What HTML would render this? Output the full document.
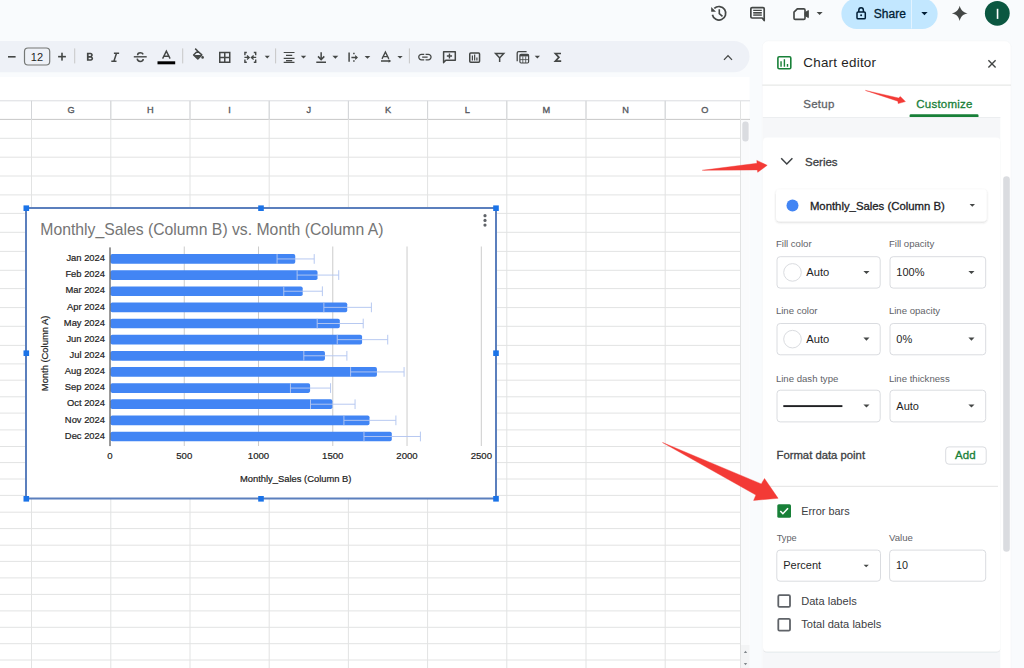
<!DOCTYPE html>
<html><head><meta charset="utf-8">
<style>
html,body{margin:0;padding:0;width:1024px;height:668px;overflow:hidden;background:#f9fbfd;font-family:"Liberation Sans", sans-serif;}
.a{position:absolute;}
svg text{font-family:"Liberation Sans", sans-serif;}
</style></head><body>
<svg class="a" style="left:0;top:0" width="1024" height="668" viewBox="0 0 1024 668">
<rect x="0" y="77" width="749.5" height="591" fill="#ffffff"/>
<line x1="0" y1="100.8" x2="750" y2="100.8" stroke="#dadce0" stroke-width="1"/>
<line x1="0" y1="119.4" x2="740.5" y2="119.4" stroke="#c7c7c7" stroke-width="1"/>
<line x1="0" y1="138.3" x2="740.5" y2="138.3" stroke="#e2e3e3" stroke-width="1"/>
<line x1="0" y1="157.2" x2="740.5" y2="157.2" stroke="#e2e3e3" stroke-width="1"/>
<line x1="0" y1="176" x2="740.5" y2="176" stroke="#e2e3e3" stroke-width="1"/>
<line x1="0" y1="194.9" x2="740.5" y2="194.9" stroke="#e2e3e3" stroke-width="1"/>
<line x1="0" y1="213.4" x2="740.5" y2="213.4" stroke="#e2e3e3" stroke-width="1"/>
<line x1="0" y1="232.3" x2="740.5" y2="232.3" stroke="#e2e3e3" stroke-width="1"/>
<line x1="0" y1="251.4" x2="740.5" y2="251.4" stroke="#e2e3e3" stroke-width="1"/>
<line x1="0" y1="270.3" x2="740.5" y2="270.3" stroke="#e2e3e3" stroke-width="1"/>
<line x1="0" y1="288.6" x2="740.5" y2="288.6" stroke="#e2e3e3" stroke-width="1"/>
<line x1="0" y1="307.6" x2="740.5" y2="307.6" stroke="#e2e3e3" stroke-width="1"/>
<line x1="0" y1="326.3" x2="740.5" y2="326.3" stroke="#e2e3e3" stroke-width="1"/>
<line x1="0" y1="345.4" x2="740.5" y2="345.4" stroke="#e2e3e3" stroke-width="1"/>
<line x1="0" y1="363.9" x2="740.5" y2="363.9" stroke="#e2e3e3" stroke-width="1"/>
<line x1="0" y1="380.2" x2="740.5" y2="380.2" stroke="#e2e3e3" stroke-width="1"/>
<line x1="0" y1="396.8" x2="740.5" y2="396.8" stroke="#e2e3e3" stroke-width="1"/>
<line x1="0" y1="413.1" x2="740.5" y2="413.1" stroke="#e2e3e3" stroke-width="1"/>
<line x1="0" y1="429.9" x2="740.5" y2="429.9" stroke="#e2e3e3" stroke-width="1"/>
<line x1="0" y1="446.5" x2="740.5" y2="446.5" stroke="#e2e3e3" stroke-width="1"/>
<line x1="0" y1="462.6" x2="740.5" y2="462.6" stroke="#e2e3e3" stroke-width="1"/>
<line x1="0" y1="479.0" x2="740.5" y2="479.0" stroke="#e2e3e3" stroke-width="1"/>
<line x1="0" y1="495.4" x2="740.5" y2="495.4" stroke="#e2e3e3" stroke-width="1"/>
<line x1="0" y1="512.2" x2="740.5" y2="512.2" stroke="#e2e3e3" stroke-width="1"/>
<line x1="0" y1="528.6" x2="740.5" y2="528.6" stroke="#e2e3e3" stroke-width="1"/>
<line x1="0" y1="545.2" x2="740.5" y2="545.2" stroke="#e2e3e3" stroke-width="1"/>
<line x1="0" y1="561.4" x2="740.5" y2="561.4" stroke="#e2e3e3" stroke-width="1"/>
<line x1="0" y1="577.9" x2="740.5" y2="577.9" stroke="#e2e3e3" stroke-width="1"/>
<line x1="0" y1="594.4" x2="740.5" y2="594.4" stroke="#e2e3e3" stroke-width="1"/>
<line x1="0" y1="610.9" x2="740.5" y2="610.9" stroke="#e2e3e3" stroke-width="1"/>
<line x1="0" y1="627.3" x2="740.5" y2="627.3" stroke="#e2e3e3" stroke-width="1"/>
<line x1="0" y1="643.7" x2="740.5" y2="643.7" stroke="#e2e3e3" stroke-width="1"/>
<line x1="0" y1="660.0" x2="740.5" y2="660.0" stroke="#e2e3e3" stroke-width="1"/>
<line x1="740.5" y1="119.4" x2="750" y2="119.4" stroke="#c7c7c7" stroke-width="1"/>
<line x1="31.5" y1="100.8" x2="31.5" y2="668" stroke="#e2e3e3" stroke-width="1"/>
<line x1="110.8" y1="100.8" x2="110.8" y2="668" stroke="#e2e3e3" stroke-width="1"/>
<line x1="190" y1="100.8" x2="190" y2="668" stroke="#e2e3e3" stroke-width="1"/>
<line x1="269.2" y1="100.8" x2="269.2" y2="668" stroke="#e2e3e3" stroke-width="1"/>
<line x1="348.4" y1="100.8" x2="348.4" y2="668" stroke="#e2e3e3" stroke-width="1"/>
<line x1="427.6" y1="100.8" x2="427.6" y2="668" stroke="#e2e3e3" stroke-width="1"/>
<line x1="506.8" y1="100.8" x2="506.8" y2="668" stroke="#e2e3e3" stroke-width="1"/>
<line x1="586" y1="100.8" x2="586" y2="668" stroke="#e2e3e3" stroke-width="1"/>
<line x1="665.2" y1="100.8" x2="665.2" y2="668" stroke="#e2e3e3" stroke-width="1"/>
<line x1="740.5" y1="100.8" x2="740.5" y2="668" stroke="#e2e3e3" stroke-width="1"/>
<line x1="31.5" y1="100.8" x2="31.5" y2="119.4" stroke="#d3d5d8" stroke-width="1"/>
<line x1="110.8" y1="100.8" x2="110.8" y2="119.4" stroke="#d3d5d8" stroke-width="1"/>
<line x1="190" y1="100.8" x2="190" y2="119.4" stroke="#d3d5d8" stroke-width="1"/>
<line x1="269.2" y1="100.8" x2="269.2" y2="119.4" stroke="#d3d5d8" stroke-width="1"/>
<line x1="348.4" y1="100.8" x2="348.4" y2="119.4" stroke="#d3d5d8" stroke-width="1"/>
<line x1="427.6" y1="100.8" x2="427.6" y2="119.4" stroke="#d3d5d8" stroke-width="1"/>
<line x1="506.8" y1="100.8" x2="506.8" y2="119.4" stroke="#d3d5d8" stroke-width="1"/>
<line x1="586" y1="100.8" x2="586" y2="119.4" stroke="#d3d5d8" stroke-width="1"/>
<line x1="665.2" y1="100.8" x2="665.2" y2="119.4" stroke="#d3d5d8" stroke-width="1"/>
<text x="71.2" y="113" font-size="9.2" fill="#575a5f" stroke="#575a5f" stroke-width="0.35" text-anchor="middle">G</text>
<text x="150.4" y="113" font-size="9.2" fill="#575a5f" stroke="#575a5f" stroke-width="0.35" text-anchor="middle">H</text>
<text x="229.6" y="113" font-size="9.2" fill="#575a5f" stroke="#575a5f" stroke-width="0.35" text-anchor="middle">I</text>
<text x="308.8" y="113" font-size="9.2" fill="#575a5f" stroke="#575a5f" stroke-width="0.35" text-anchor="middle">J</text>
<text x="388.0" y="113" font-size="9.2" fill="#575a5f" stroke="#575a5f" stroke-width="0.35" text-anchor="middle">K</text>
<text x="467.2" y="113" font-size="9.2" fill="#575a5f" stroke="#575a5f" stroke-width="0.35" text-anchor="middle">L</text>
<text x="546.4" y="113" font-size="9.2" fill="#575a5f" stroke="#575a5f" stroke-width="0.35" text-anchor="middle">M</text>
<text x="625.6" y="113" font-size="9.2" fill="#575a5f" stroke="#575a5f" stroke-width="0.35" text-anchor="middle">N</text>
<text x="704.8" y="113" font-size="9.2" fill="#575a5f" stroke="#575a5f" stroke-width="0.35" text-anchor="middle">O</text>
<rect x="741" y="119.9" width="8.5" height="548" fill="#fafbfc"/>
<rect x="742.3" y="121.6" width="6.3" height="20" rx="3" fill="#dadce0"/>
<rect x="741" y="645" width="8.5" height="23" fill="#f3f4f5"/>
<path d="M743.8 653.1 L745.5 650.8 L747.2 653.1 Z" fill="#80868b"/>
<path d="M743.8 663.0 L745.5 665.3 L747.2 663.0 Z" fill="#80868b"/>
<rect x="26" y="208" width="470" height="290.5" fill="#ffffff" stroke="#5b7fbd" stroke-width="2"/>
<text x="40.3" y="235" font-size="15.75" fill="#757575">Monthly_Sales (Column B) vs. Month (Column A)</text>
<circle cx="485" cy="215.7" r="1.6" fill="#5f6368"/>
<circle cx="485" cy="220.4" r="1.6" fill="#5f6368"/>
<circle cx="485" cy="225.1" r="1.6" fill="#5f6368"/>
<line x1="184.26" y1="246.5" x2="184.26" y2="446" stroke="#cccccc" stroke-width="1"/>
<text x="184.26" y="458.8" font-size="9.6" fill="#222222" stroke="#222222" stroke-width="0.2" text-anchor="middle">500</text>
<line x1="258.52" y1="246.5" x2="258.52" y2="446" stroke="#cccccc" stroke-width="1"/>
<text x="258.52" y="458.8" font-size="9.6" fill="#222222" stroke="#222222" stroke-width="0.2" text-anchor="middle">1000</text>
<line x1="332.78" y1="246.5" x2="332.78" y2="446" stroke="#cccccc" stroke-width="1"/>
<text x="332.78" y="458.8" font-size="9.6" fill="#222222" stroke="#222222" stroke-width="0.2" text-anchor="middle">1500</text>
<line x1="407.04" y1="246.5" x2="407.04" y2="446" stroke="#cccccc" stroke-width="1"/>
<text x="407.04" y="458.8" font-size="9.6" fill="#222222" stroke="#222222" stroke-width="0.2" text-anchor="middle">2000</text>
<line x1="481.30" y1="246.5" x2="481.30" y2="446" stroke="#cccccc" stroke-width="1"/>
<text x="481.30" y="458.8" font-size="9.6" fill="#222222" stroke="#222222" stroke-width="0.2" text-anchor="middle">2500</text>
<text x="110" y="458.8" font-size="9.6" fill="#222222" stroke="#222222" stroke-width="0.2" text-anchor="middle">0</text>
<text x="105" y="261.10" font-size="9.4" fill="#222222" stroke="#222222" stroke-width="0.2" text-anchor="end">Jan 2024</text>
<rect x="110.5" y="254.10" width="184.75" height="9.7" rx="1.8" fill="#4285f4"/>
<line x1="277.09" y1="258.95" x2="314.22" y2="258.95" stroke="#b3c6f0" stroke-width="0.95"/>
<line x1="277.09" y1="254.10" x2="277.09" y2="263.80" stroke="#b3c6f0" stroke-width="0.95"/>
<line x1="314.22" y1="254.10" x2="314.22" y2="263.80" stroke="#b3c6f0" stroke-width="0.95"/>
<text x="105" y="277.24" font-size="9.4" fill="#222222" stroke="#222222" stroke-width="0.2" text-anchor="end">Feb 2024</text>
<rect x="110.5" y="270.24" width="207.03" height="9.7" rx="1.8" fill="#4285f4"/>
<line x1="297.14" y1="275.09" x2="338.72" y2="275.09" stroke="#b3c6f0" stroke-width="0.95"/>
<line x1="297.14" y1="270.24" x2="297.14" y2="279.94" stroke="#b3c6f0" stroke-width="0.95"/>
<line x1="338.72" y1="270.24" x2="338.72" y2="279.94" stroke="#b3c6f0" stroke-width="0.95"/>
<text x="105" y="293.38" font-size="9.4" fill="#222222" stroke="#222222" stroke-width="0.2" text-anchor="end">Mar 2024</text>
<rect x="110.5" y="286.38" width="192.18" height="9.7" rx="1.8" fill="#4285f4"/>
<line x1="283.77" y1="291.23" x2="322.38" y2="291.23" stroke="#b3c6f0" stroke-width="0.95"/>
<line x1="283.77" y1="286.38" x2="283.77" y2="296.08" stroke="#b3c6f0" stroke-width="0.95"/>
<line x1="322.38" y1="286.38" x2="322.38" y2="296.08" stroke="#b3c6f0" stroke-width="0.95"/>
<text x="105" y="309.52" font-size="9.4" fill="#222222" stroke="#222222" stroke-width="0.2" text-anchor="end">Apr 2024</text>
<rect x="110.5" y="302.52" width="236.73" height="9.7" rx="1.8" fill="#4285f4"/>
<line x1="323.87" y1="307.37" x2="371.40" y2="307.37" stroke="#b3c6f0" stroke-width="0.95"/>
<line x1="323.87" y1="302.52" x2="323.87" y2="312.22" stroke="#b3c6f0" stroke-width="0.95"/>
<line x1="371.40" y1="302.52" x2="371.40" y2="312.22" stroke="#b3c6f0" stroke-width="0.95"/>
<text x="105" y="325.66" font-size="9.4" fill="#222222" stroke="#222222" stroke-width="0.2" text-anchor="end">May 2024</text>
<rect x="110.5" y="318.66" width="229.31" height="9.7" rx="1.8" fill="#4285f4"/>
<line x1="317.19" y1="323.51" x2="363.23" y2="323.51" stroke="#b3c6f0" stroke-width="0.95"/>
<line x1="317.19" y1="318.66" x2="317.19" y2="328.36" stroke="#b3c6f0" stroke-width="0.95"/>
<line x1="363.23" y1="318.66" x2="363.23" y2="328.36" stroke="#b3c6f0" stroke-width="0.95"/>
<text x="105" y="341.80" font-size="9.4" fill="#222222" stroke="#222222" stroke-width="0.2" text-anchor="end">Jun 2024</text>
<rect x="110.5" y="334.80" width="251.58" height="9.7" rx="1.8" fill="#4285f4"/>
<line x1="337.24" y1="339.65" x2="387.73" y2="339.65" stroke="#b3c6f0" stroke-width="0.95"/>
<line x1="337.24" y1="334.80" x2="337.24" y2="344.50" stroke="#b3c6f0" stroke-width="0.95"/>
<line x1="387.73" y1="334.80" x2="387.73" y2="344.50" stroke="#b3c6f0" stroke-width="0.95"/>
<text x="105" y="357.94" font-size="9.4" fill="#222222" stroke="#222222" stroke-width="0.2" text-anchor="end">Jul 2024</text>
<rect x="110.5" y="350.94" width="214.45" height="9.7" rx="1.8" fill="#4285f4"/>
<line x1="303.82" y1="355.79" x2="346.89" y2="355.79" stroke="#b3c6f0" stroke-width="0.95"/>
<line x1="303.82" y1="350.94" x2="303.82" y2="360.64" stroke="#b3c6f0" stroke-width="0.95"/>
<line x1="346.89" y1="350.94" x2="346.89" y2="360.64" stroke="#b3c6f0" stroke-width="0.95"/>
<text x="105" y="374.08" font-size="9.4" fill="#222222" stroke="#222222" stroke-width="0.2" text-anchor="end">Aug 2024</text>
<rect x="110.5" y="367.08" width="266.44" height="9.7" rx="1.8" fill="#4285f4"/>
<line x1="350.60" y1="371.93" x2="404.07" y2="371.93" stroke="#b3c6f0" stroke-width="0.95"/>
<line x1="350.60" y1="367.08" x2="350.60" y2="376.78" stroke="#b3c6f0" stroke-width="0.95"/>
<line x1="404.07" y1="367.08" x2="404.07" y2="376.78" stroke="#b3c6f0" stroke-width="0.95"/>
<text x="105" y="390.22" font-size="9.4" fill="#222222" stroke="#222222" stroke-width="0.2" text-anchor="end">Sep 2024</text>
<rect x="110.5" y="383.22" width="199.60" height="9.7" rx="1.8" fill="#4285f4"/>
<line x1="290.45" y1="388.07" x2="330.55" y2="388.07" stroke="#b3c6f0" stroke-width="0.95"/>
<line x1="290.45" y1="383.22" x2="290.45" y2="392.92" stroke="#b3c6f0" stroke-width="0.95"/>
<line x1="330.55" y1="383.22" x2="330.55" y2="392.92" stroke="#b3c6f0" stroke-width="0.95"/>
<text x="105" y="406.36" font-size="9.4" fill="#222222" stroke="#222222" stroke-width="0.2" text-anchor="end">Oct 2024</text>
<rect x="110.5" y="399.36" width="221.88" height="9.7" rx="1.8" fill="#4285f4"/>
<line x1="310.50" y1="404.21" x2="355.06" y2="404.21" stroke="#b3c6f0" stroke-width="0.95"/>
<line x1="310.50" y1="399.36" x2="310.50" y2="409.06" stroke="#b3c6f0" stroke-width="0.95"/>
<line x1="355.06" y1="399.36" x2="355.06" y2="409.06" stroke="#b3c6f0" stroke-width="0.95"/>
<text x="105" y="422.50" font-size="9.4" fill="#222222" stroke="#222222" stroke-width="0.2" text-anchor="end">Nov 2024</text>
<rect x="110.5" y="415.50" width="259.01" height="9.7" rx="1.8" fill="#4285f4"/>
<line x1="343.92" y1="420.35" x2="395.90" y2="420.35" stroke="#b3c6f0" stroke-width="0.95"/>
<line x1="343.92" y1="415.50" x2="343.92" y2="425.20" stroke="#b3c6f0" stroke-width="0.95"/>
<line x1="395.90" y1="415.50" x2="395.90" y2="425.20" stroke="#b3c6f0" stroke-width="0.95"/>
<text x="105" y="438.64" font-size="9.4" fill="#222222" stroke="#222222" stroke-width="0.2" text-anchor="end">Dec 2024</text>
<rect x="110.5" y="431.64" width="281.29" height="9.7" rx="1.8" fill="#4285f4"/>
<line x1="363.97" y1="436.49" x2="420.41" y2="436.49" stroke="#b3c6f0" stroke-width="0.95"/>
<line x1="363.97" y1="431.64" x2="363.97" y2="441.34" stroke="#b3c6f0" stroke-width="0.95"/>
<line x1="420.41" y1="431.64" x2="420.41" y2="441.34" stroke="#b3c6f0" stroke-width="0.95"/>
<line x1="110" y1="247.4" x2="110" y2="446.1" stroke="#333333" stroke-width="1"/>
<text x="295.7" y="482.1" font-size="9.4" fill="#222222" stroke="#222222" stroke-width="0.2" text-anchor="middle">Monthly_Sales (Column B)</text>
<text transform="translate(48.2,353.4) rotate(-90)" x="0" y="0" font-size="9.4" fill="#222222" stroke="#222222" stroke-width="0.2" text-anchor="middle">Month (Column A)</text>
<rect x="23.5" y="205.4" width="5.6" height="5.6" fill="#1a73e8"/>
<rect x="258.2" y="205.4" width="5.6" height="5.6" fill="#1a73e8"/>
<rect x="493.2" y="205.4" width="5.6" height="5.6" fill="#1a73e8"/>
<rect x="23.5" y="350.4" width="5.6" height="5.6" fill="#1a73e8"/>
<rect x="493.2" y="350.4" width="5.6" height="5.6" fill="#1a73e8"/>
<rect x="23.5" y="496.0" width="5.6" height="5.6" fill="#1a73e8"/>
<rect x="258.2" y="496.0" width="5.6" height="5.6" fill="#1a73e8"/>
<rect x="493.2" y="496.0" width="5.6" height="5.6" fill="#1a73e8"/>
<path d="M712.4 14.7 A6.75 6.75 0 1 0 714.3 8.4" fill="none" stroke="#444746" stroke-width="1.7"/>
<path d="M711.2 7.0 L711.2 11.8 L716.0 11.8 Z" fill="#444746"/>
<path d="M719.3 9.2 V13.6 L722.5 16.3" fill="none" stroke="#444746" stroke-width="1.6"/>
<path d="M762.2 18.0 H752.1 Q750.85 18.0 750.85 16.75 V8.85 Q750.85 7.55 752.1 7.55 H763.0 Q764.2 7.55 764.2 8.85 V20.6 Z" fill="none" stroke="#444746" stroke-width="1.7" stroke-linejoin="round"/>
<rect x="753.3" y="12.7" width="8.4" height="2.5" fill="#9a9b9b"/>
<path d="M753.2 10.4 H761.8 M753.2 12.6 H761.8 M753.2 15.2 H761.8" fill="none" stroke="#444746" stroke-width="1.1"/>
<path d="M797.3 8.9 H803.8 Q805.0 8.9 805.0 10.1 V18.3 Q805.0 19.4 803.8 19.4 H795.2 Q794.0 19.4 794.0 18.3 V12.2 Z" fill="none" stroke="#444746" stroke-width="1.65" stroke-linejoin="round"/>
<path d="M805.0 12.6 L808.4 10.6 V17.6 L805.0 15.7 Z" fill="#444746" stroke="#444746" stroke-width="0.9" stroke-linejoin="round"/>
<path d="M816.60 12.00 L822.60 12.00 L819.60 15.00 Z" fill="#444746"/>
<rect x="841.4" y="-1.5" width="96.2" height="30.5" rx="15.25" fill="#c2e7ff"/>
<line x1="911.5" y1="-1" x2="911.5" y2="28.5" stroke="#e3f3ff" stroke-width="1"/>
<path d="M858.8 12.0 V10.4 Q858.8 7.7 861.1 7.7 Q863.4 7.7 863.4 10.4 V12.0" fill="none" stroke="#001d35" stroke-width="1.5"/>
<rect x="857.0" y="11.9" width="8.3" height="6.9" rx="1.1" fill="none" stroke="#001d35" stroke-width="1.5"/>
<circle cx="861.15" cy="15.35" r="1.0" fill="#001d35"/>
<text x="873.8" y="18.2" font-size="12" fill="#001d35" stroke="#001d35" stroke-width="0.3" letter-spacing="0">Share</text>
<path d="M921.30 12.02 L927.60 12.02 L924.45 15.18 Z" fill="#001d35"/>
<path d="M959.7 5.7 C960.9 10.5 963.6 12.3 967.6 13.25 C963.6 14.2 960.9 16.0 959.7 21.0 C958.5 16.0 955.8 14.2 951.8 13.25 C955.8 12.3 958.5 10.5 959.7 5.7 Z" fill="#444746"/>
<circle cx="997.3" cy="13.3" r="12.4" fill="#0b5741"/>
<rect x="996.75" y="8.8" width="1.6" height="10.1" fill="#ffffff"/>
<rect x="-30" y="41" width="779.5" height="31.2" rx="15.6" fill="#eef1f7"/>
<rect x="8" y="56.0" width="7.6" height="1.6" fill="#444746"/>
<rect x="24.5" y="48" width="25.2" height="17" rx="3.5" fill="none" stroke="#747775" stroke-width="1.2"/>
<text x="36.9" y="60.6" font-size="11" fill="#1f1f1f" text-anchor="middle">12</text>
<rect x="58.1" y="55.85" width="7.8" height="1.6" fill="#444746"/>
<rect x="61.2" y="52.7" width="1.6" height="7.9" fill="#444746"/>
<rect x="74.2" y="48.4" width="1" height="15" fill="#c7c7c7"/>
<rect x="182.2" y="48.4" width="1" height="15" fill="#c7c7c7"/>
<rect x="275.1" y="48.4" width="1" height="15" fill="#c7c7c7"/>
<rect x="408.9" y="48.4" width="1" height="15" fill="#c7c7c7"/>
<path transform="translate(82.84,50.38) scale(0.5798)" d="M15.6 10.79c.97-.67 1.65-1.77 1.65-2.79 0-2.26-1.75-4-4-4H7v14h7.04c2.09 0 3.71-1.7 3.71-3.79 0-1.52-.86-2.82-2.15-3.42zM10 6.5h3c.83 0 1.5.67 1.5 1.5s-.67 1.5-1.5 1.5h-3v-3zm3.5 9H10v-3h3.5c.83 0 1.5.67 1.5 1.5s-.67 1.5-1.5 1.5z" fill="#444746" />
<path d="M113.9 53.3 H119.1 M111.3 61.3 H116.5 M116.5 53.3 L113.9 61.3" fill="none" stroke="#444746" stroke-width="1.5"/>
<path d="M143.2 54.4 Q142.5 52.8 140.3 52.8 Q137.6 52.8 137.6 55.2 M137.2 58.6 Q137.5 61.4 140.3 61.4 Q143.2 61.4 143.2 59" fill="none" stroke="#444746" stroke-width="1.5"/>
<rect x="133.8" y="56.1" width="12.9" height="1.4" fill="#444746"/>
<path d="M162.6 58.6 L166.35 51.1 L170.1 58.6 M163.9 56.2 H168.8" fill="none" stroke="#444746" stroke-width="1.4"/>
<rect x="157.5" y="61.3" width="17.7" height="3" fill="#000000"/>
<path d="M195.2 48.6 L197.6 51 M197.6 51 L193.6 55 L197.8 58.9 L201.8 54.9 Z" fill="none" stroke="#444746" stroke-width="1.5" stroke-linejoin="round"/>
<path d="M194.3 55 L201.1 55 L197.8 58.3 Z" fill="#444746"/>
<circle cx="202.6" cy="57.4" r="1.3" fill="#444746"/>
<path d="M219.75 52.55 H229.75 V62.25 H219.75 Z M224.75 52.55 V62.25 M219.75 57.4 H229.75" fill="none" stroke="#444746" stroke-width="1.5"/>
<path d="M246.8 52.5 H244.9 V55.2 M244.9 59.6 V62.3 H246.8 M253.8 52.5 H255.7 V55.2 M255.7 59.6 V62.3 H253.8" fill="none" stroke="#444746" stroke-width="1.4"/>
<path d="M244.4 57.4 H249 M247 55.4 L249.2 57.4 L247 59.4 M256.2 57.4 H251.6 M253.6 55.4 L251.4 57.4 L253.6 59.4" fill="none" stroke="#444746" stroke-width="1.3"/>
<path d="M264.70 55.82 L269.80 55.82 L267.25 58.38 Z" fill="#444746"/>
<path d="M283.7 52.5 H294.5 M286 55.4 H292.2 M283.7 58.3 H294.5 M286 60.6 H292.2 M283.7 62.4 H294.5" fill="none" stroke="#444746" stroke-width="1.2"/>
<path d="M300.80 55.75 L306.20 55.75 L303.50 58.45 Z" fill="#444746"/>
<path d="M321.15 52.2 V59.2 M318 56.4 L321.15 59.6 L324.3 56.4 M316.3 62.2 H326" fill="none" stroke="#444746" stroke-width="1.5"/>
<path d="M332.40 55.82 L338.30 55.82 L335.35 58.78 Z" fill="#444746"/>
<path d="M349.1 52.4 V61.7 M353.9 52.7 V54.2 M353.9 60.2 V61.7 M351.4 57.5 H357.0" fill="none" stroke="#444746" stroke-width="1.5"/>
<path d="M355.2 55.1 L358.0 57.5 L355.2 59.9 Z" fill="#444746"/>
<path d="M364.60 55.88 L370.30 55.88 L367.45 58.72 Z" fill="#444746"/>
<path d="M382.0 58.9 L385.4 52.0 L388.8 58.9 M383.2 56.6 H387.6 M381.0 61.0 H389.2" fill="none" stroke="#444746" stroke-width="1.35"/>
<path d="M388.6 59.2 L391.2 61.0 L388.6 62.8 Z" fill="#444746"/>
<path d="M397.40 55.97 L402.70 55.97 L400.05 58.62 Z" fill="#444746"/>
<path transform="translate(416.74,48.94) scale(0.6800)" d="M3.9 12c0-1.71 1.39-3.1 3.1-3.1h4V7H7c-2.76 0-5 2.24-5 5s2.24 5 5 5h4v-1.9H7c-1.71 0-3.1-1.39-3.1-3.1zM8 13h8v-2H8v2zm9-6h-4v1.9h4c1.71 0 3.1 1.39 3.1 3.1s-1.39 3.1-3.1 3.1h-4V17h4c2.76 0 5-2.24 5-5s-2.24-5-5-5z" fill="#444746" />
<path d="M443.6 51.8 H455.3 V60.3 H445.8 L443.6 62.6 Z" fill="none" stroke="#444746" stroke-width="1.5" stroke-linejoin="round"/>
<path d="M449.45 53.4 V58.6 M446.85 56 H452.05" fill="none" stroke="#444746" stroke-width="1.4"/>
<rect x="469.75" y="52.95" width="9.8" height="9.4" rx="1" fill="none" stroke="#444746" stroke-width="1.5"/>
<path d="M472.4 55.6 V60.4 M474.65 54.4 V60.4 M476.9 57.6 V60.4" fill="none" stroke="#444746" stroke-width="1.2"/>
<path d="M495.6 53.6 H503.7 L499.65 57.9 Z M499.65 57.4 V61.9" fill="none" stroke="#444746" stroke-width="1.5" stroke-linejoin="miter"/>
<path d="M517.2 61.3 V53.0 Q517.2 51.6 518.6 51.6 H526.6" fill="none" stroke="#444746" stroke-width="1.3"/>
<rect x="519.9" y="54.3" width="8.7" height="8.7" rx="1.2" fill="none" stroke="#444746" stroke-width="1.2"/>
<rect x="519.9" y="54.3" width="8.7" height="2.1" fill="#444746"/>
<path d="M519.9 59.6 H528.6 M522.8 56.4 V63 M525.7 56.4 V63" fill="none" stroke="#444746" stroke-width="0.8"/>
<path d="M534.70 55.78 L540.00 55.78 L537.35 58.42 Z" fill="#444746"/>
<path d="M561.0 53.5 H555.4 L558.9 57.3 L555.4 61.1 H561.2" fill="none" stroke="#444746" stroke-width="1.7" stroke-linejoin="miter"/>
<path d="M724.0 59.9 L728.0 55.6 L732.0 59.9" fill="none" stroke="#444746" stroke-width="1.3"/>
<defs><filter id="sh" x="-10%" y="-10%" width="120%" height="120%"><feDropShadow dx="0" dy="1" stdDeviation="1" flood-color="#3c4043" flood-opacity="0.22"/></filter><filter id="sh2" x="-10%" y="-10%" width="120%" height="120%"><feDropShadow dx="0" dy="0.8" stdDeviation="0.7" flood-color="#3c4043" flood-opacity="0.12"/></filter></defs>
<rect x="762.3" y="40.8" width="248.7" height="640" rx="6" fill="#ffffff" stroke="#f0f2f4" stroke-width="0.5"/>
<rect x="777.9" y="56.8" width="12.9" height="11.9" rx="1.3" fill="none" stroke="#188038" stroke-width="1.6"/>
<path d="M781.05 61.3 V66.8 M784.4 59.2 V66.8 M787.5 63.9 V66.8" fill="none" stroke="#188038" stroke-width="1.4"/>
<text x="803.3" y="66.7" font-size="13.4" fill="#1f1f1f" font-weight="normal" text-anchor="start" letter-spacing="0.25">Chart editor</text>
<path d="M988.4 60.2 L995.6 67.4 M995.6 60.2 L988.4 67.4" fill="none" stroke="#444746" stroke-width="1.4"/>
<rect x="762.3" y="84.6" width="248.7" height="1" fill="#e1e3e1"/>
<text x="803.3" y="108.1" font-size="11.5" fill="#5f6368" font-weight="normal" text-anchor="start" letter-spacing="0.25" stroke="#5f6368" stroke-width="0.3">Setup</text>
<text x="916.2" y="108.0" font-size="11.5" fill="#188038" font-weight="normal" text-anchor="start" letter-spacing="0.25" stroke="#188038" stroke-width="0.3">Customize</text>
<path d="M909.6 117 V115.5 Q909.6 114.3 910.8 114.3 H977.3 Q978.5 114.3 978.5 115.5 V117 Z" fill="#188038"/>
<rect x="762.8" y="117" width="237.5" height="560" fill="#f6f7f9"/>
<rect x="762.8" y="117" width="237.5" height="1" fill="#eceef0"/>
<rect x="763" y="137.6" width="237.3" height="514" rx="4" fill="#ffffff" filter="url(#sh2)"/>
<rect x="1003.2" y="176.2" width="6.6" height="375.5" rx="3.3" fill="#dadce0"/>
<path d="M781.2 158.3 L786.8 164 L792.4 158.3" fill="none" stroke="#3c4043" stroke-width="1.5"/>
<text x="805" y="165.9" font-size="11.5" fill="#3c4043" font-weight="normal" text-anchor="start" letter-spacing="0" stroke="#3c4043" stroke-width="0.3">Series</text>
<rect x="776" y="189.3" width="210.7" height="32.2" rx="4" fill="#ffffff" filter="url(#sh)"/>
<circle cx="792.5" cy="205.4" r="6" fill="#4285f4"/>
<text x="809.9" y="209.8" font-size="11.35" fill="#202124" font-weight="normal" text-anchor="start" letter-spacing="0" stroke="#202124" stroke-width="0.3">Monthly_Sales (Column B)</text>
<path d="M969.60 204.05 L975.00 204.05 L972.30 206.75 Z" fill="#444746"/>
<text x="775.9" y="247.1" font-size="9.6" fill="#5f6368" font-weight="normal" text-anchor="start" letter-spacing="0">Fill color</text>
<text x="888.9" y="247.1" font-size="9.6" fill="#5f6368" font-weight="normal" text-anchor="start" letter-spacing="0">Fill opacity</text>
<rect x="777.00" y="256.70" width="103.20" height="31.40" rx="3.2" fill="#ffffff" stroke="#dadce0" stroke-width="1"/>
<rect x="890.00" y="256.70" width="95.70" height="31.40" rx="3.2" fill="#ffffff" stroke="#dadce0" stroke-width="1"/>
<circle cx="792.5" cy="272.40" r="8.8" fill="#ffffff" stroke="#dadce0" stroke-width="1"/>
<text x="806.3" y="276.4" font-size="11.2" fill="#1f1f1f" font-weight="normal" text-anchor="start" letter-spacing="0">Auto</text>
<path d="M863.40 270.88 L869.50 270.88 L866.45 273.92 Z" fill="#444746"/>
<text x="896.3" y="276.4" font-size="11" fill="#1f1f1f" font-weight="normal" text-anchor="start" letter-spacing="0">100%</text>
<path d="M968.40 270.88 L974.50 270.88 L971.45 273.92 Z" fill="#444746"/>
<text x="775.9" y="314.0" font-size="9.6" fill="#5f6368" font-weight="normal" text-anchor="start" letter-spacing="0">Line color</text>
<text x="888.9" y="314.0" font-size="9.6" fill="#5f6368" font-weight="normal" text-anchor="start" letter-spacing="0">Line opacity</text>
<rect x="777.00" y="323.50" width="103.20" height="31.30" rx="3.2" fill="#ffffff" stroke="#dadce0" stroke-width="1"/>
<rect x="890.00" y="323.50" width="95.70" height="31.30" rx="3.2" fill="#ffffff" stroke="#dadce0" stroke-width="1"/>
<circle cx="792.5" cy="339.15" r="8.8" fill="#ffffff" stroke="#dadce0" stroke-width="1"/>
<text x="806.3" y="343.15" font-size="11.2" fill="#1f1f1f" font-weight="normal" text-anchor="start" letter-spacing="0">Auto</text>
<path d="M863.40 337.62 L869.50 337.62 L866.45 340.67 Z" fill="#444746"/>
<text x="896.3" y="343.15" font-size="11" fill="#1f1f1f" font-weight="normal" text-anchor="start" letter-spacing="0">0%</text>
<path d="M968.40 337.62 L974.50 337.62 L971.45 340.67 Z" fill="#444746"/>
<text x="775.9" y="381.7" font-size="9.6" fill="#5f6368" font-weight="normal" text-anchor="start" letter-spacing="0">Line dash type</text>
<text x="888.9" y="381.7" font-size="9.6" fill="#5f6368" font-weight="normal" text-anchor="start" letter-spacing="0">Line thickness</text>
<rect x="777.00" y="390.20" width="103.20" height="31.70" rx="3.2" fill="#ffffff" stroke="#dadce0" stroke-width="1"/>
<rect x="890.00" y="390.20" width="95.70" height="31.70" rx="3.2" fill="#ffffff" stroke="#dadce0" stroke-width="1"/>
<rect x="783.3" y="405.15" width="59.1" height="1.9" fill="#202124"/>
<path d="M863.40 404.52 L869.50 404.52 L866.45 407.57 Z" fill="#444746"/>
<text x="896.3" y="410.04999999999995" font-size="11" fill="#1f1f1f" font-weight="normal" text-anchor="start" letter-spacing="0">Auto</text>
<path d="M968.40 404.52 L974.50 404.52 L971.45 407.57 Z" fill="#444746"/>
<text x="776.5" y="458.8" font-size="11.3" fill="#3c4043" font-weight="normal" text-anchor="start" letter-spacing="0" stroke="#3c4043" stroke-width="0.3">Format data point</text>
<rect x="945.70" y="446.90" width="40.50" height="17.30" rx="3.2" fill="#ffffff" stroke="#dadce0" stroke-width="1"/>
<text x="965.3" y="459.3" font-size="11.5" fill="#188038" font-weight="normal" text-anchor="middle" letter-spacing="0" stroke="#188038" stroke-width="0.3">Add</text>
<rect x="765" y="485.8" width="233" height="1" fill="#e3e3e3"/>
<rect x="777.3" y="504.2" width="13.7" height="13.6" rx="1.5" fill="#188038"/>
<path d="M780.3 511 L782.9 513.7 L788 508.3" fill="none" stroke="#ffffff" stroke-width="1.6"/>
<text x="801.2" y="515.1" font-size="10.9" fill="#3c4043" font-weight="normal" text-anchor="start" letter-spacing="0">Error bars</text>
<text x="776.7" y="540.8" font-size="9.2" fill="#5f6368" font-weight="normal" text-anchor="start" letter-spacing="0">Type</text>
<text x="889.1" y="540.8" font-size="9.6" fill="#5f6368" font-weight="normal" text-anchor="start" letter-spacing="0">Value</text>
<rect x="776.80" y="550.10" width="103.70" height="31.10" rx="3.2" fill="#ffffff" stroke="#dadce0" stroke-width="1"/>
<rect x="889.60" y="550.10" width="96.10" height="31.10" rx="3.2" fill="#ffffff" stroke="#dadce0" stroke-width="1"/>
<text x="783.2" y="569.1" font-size="11" fill="#1f1f1f" font-weight="normal" text-anchor="start" letter-spacing="0">Percent</text>
<path d="M863.60 564.70 L868.80 564.70 L866.20 567.30 Z" fill="#444746"/>
<text x="895.9" y="569.1" font-size="10.8" fill="#1f1f1f" font-weight="normal" text-anchor="start" letter-spacing="0">10</text>
<rect x="778.3" y="595.20" width="11.7" height="11.7" rx="1.2" fill="none" stroke="#5f6368" stroke-width="1.8"/>
<text x="801.2" y="604.7" font-size="11.1" fill="#3c4043" font-weight="normal" text-anchor="start" letter-spacing="0">Data labels</text>
<rect x="778.3" y="618.90" width="11.7" height="11.7" rx="1.2" fill="none" stroke="#5f6368" stroke-width="1.8"/>
<text x="801.2" y="628.2" font-size="11.1" fill="#3c4043" font-weight="normal" text-anchor="start" letter-spacing="0">Total data labels</text>
<path d="M865.40 90.40 L898.60 98.00 L900.30 96.40 L905.40 101.60 L898.20 103.60 L897.80 101.20 Z" fill="#f33a36" stroke="#f33a36" stroke-width="0.4" stroke-linejoin="round"/>
<path d="M702.30 170.30 L757.00 163.30 L756.80 160.40 L767.20 165.30 L757.70 172.30 L757.30 169.90 Z" fill="#f33a36" stroke="#f33a36" stroke-width="0.4" stroke-linejoin="round"/>
<path d="M662.50 442.50 L761.30 483.90 L764.50 478.50 L778.10 498.30 L753.60 500.40 L755.90 495.00 Z" fill="#f33a36" stroke="#f33a36" stroke-width="0.4" stroke-linejoin="round"/>
</svg>
</body></html>
